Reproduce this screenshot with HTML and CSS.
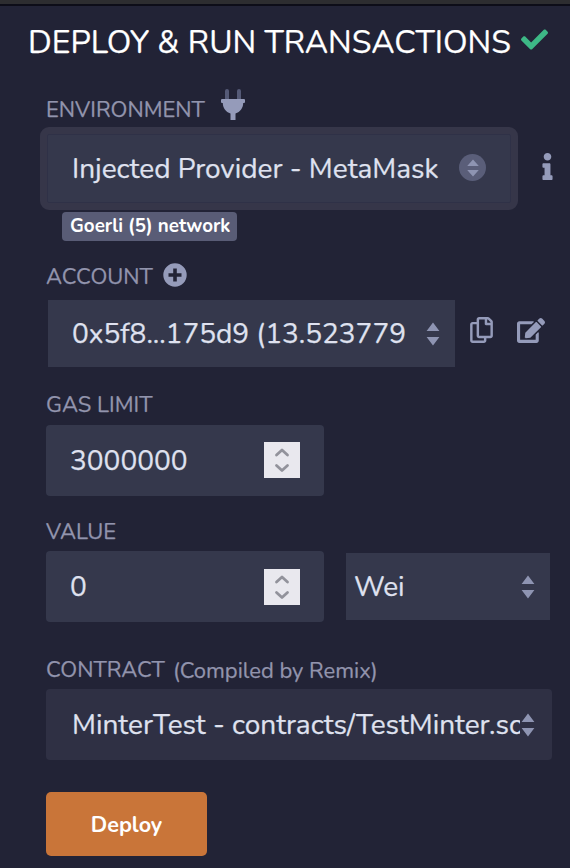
FILE: index.html
```html
<!DOCTYPE html>
<html lang="en">
<head>
<meta charset="utf-8">
<title>Deploy &amp; run transactions</title>
<link rel="stylesheet" href="styles.css">
</head>
<body>
<svg class="defs" aria-hidden="true">
  <symbol id="arrows" viewBox="0 0 14 24"><path d="M7 .5 13.4 9H.6zM.6 15h12.8L7 23.5z"/></symbol>
  <symbol id="spin" viewBox="0 0 36 36"><path d="m12.5 13 5.500-5 5.500 5M12.500 23.500l5.500 5 5.500-5" fill="none" stroke="#92929b" stroke-width="2.800" stroke-linecap="round" stroke-linejoin="round"/></symbol>
</svg>
<main class="panel">
  <header class="heading">
    <h1 class="title">DEPLOY &amp; RUN TRANSACTIONS</h1>
    <svg class="check" viewBox="0 0 512 512"><path d="M173.898 439.404l-166.400-166.400c-9.997-9.997-9.997-26.206 0-36.204l36.203-36.204c9.997-9.998 26.207-9.998 36.204 0L192 312.690 432.095 72.596c9.997-9.997 26.207-9.997 36.204 0l36.203 36.204c9.997 9.997 9.997 26.206 0 36.204l-294.400 294.401c-9.998 9.997-26.207 9.997-36.204-.001z"/></svg>
  </header>

  <section class="group environment">
    <div class="label-row">
      <label class="label">ENVIRONMENT</label>
      <svg class="icon plug" viewBox="0 0 24 32"><path class="prongs" d="M4 2a2 2 0 0 1 4 0v8H4zM16 2a2 2 0 0 1 4 0v8h-4z"/><path d="M1 10h22a1 1 0 0 1 1 1v2a1 1 0 0 1-1 1h-.800c0 5-3 9-7.700 10.500V31h-5v-6.500C4.800 23 1.800 19 1.800 14H1a1 1 0 0 1-1-1v-2a1 1 0 0 1 1-1z"/></svg>
    </div>
    <div class="row">
      <div class="field focused">
        <span class="text">Injected Provider - MetaMask</span>
        <span class="disc"><svg class="arrows small" viewBox="0 0 12 18"><path d="M6 .5 11.800 7H.2zM.2 11h11.600L6 17.500z"/></svg></span>
      </div>
      <svg class="icon info" viewBox="0 0 192 512"><path d="M20 424.229h20V279.771H20c-11.046 0-20-8.954-20-20V212c0-11.046 8.954-20 20-20h112c11.046 0 20 8.954 20 20v212.229h20c11.046 0 20 8.954 20 20V492c0 11.046-8.954 20-20 20H20c-11.046 0-20-8.954-20-20v-47.771c0-11.046 8.954-20 20-20zM96 0C56.235 0 24 32.235 24 72s32.235 72 72 72 72-32.235 72-72S135.764 0 96 0z"/></svg>
    </div>
    <div class="badge">Goerli (5) network</div>
  </section>

  <section class="group account">
    <div class="label-row">
      <label class="label">ACCOUNT</label>
      <svg class="icon plus" viewBox="0 0 24 24"><path fill-rule="evenodd" d="M12 .300a11.700 11.700 0 1 1 0 23.400A11.700 11.700 0 0 1 12 .300zM10.200 5.500v4.700H5.500v3.600h4.700v4.700h3.600v-4.700h4.700v-3.600h-4.700V5.500z"/></svg>
    </div>
    <div class="row">
      <div class="field select-account">
        <span class="text">0x5f8...175d9 (13.523779</span>
        <svg class="arrows"><use href="#arrows"/></svg>
      </div>
      <svg class="icon copy" viewBox="0 0 448 512"><path d="M433.941 65.941l-51.882-51.882A48 48 0 0 0 348.118 0H176c-26.510 0-48 21.490-48 48v48H48c-26.510 0-48 21.490-48 48v320c0 26.510 21.490 48 48 48h224c26.510 0 48-21.490 48-48v-48h80c26.510 0 48-21.490 48-48V99.882a48 48 0 0 0-14.059-33.941zM266 464H54a6 6 0 0 1-6-6V150a6 6 0 0 1 6-6h74v224c0 26.510 21.490 48 48 48h96v42a6 6 0 0 1-6 6zm128-96H182a6 6 0 0 1-6-6V54a6 6 0 0 1 6-6h106v88c0 13.255 10.745 24 24 24h88v202a6 6 0 0 1-6 6zm6-256h-64V48h9.632c1.591 0 3.117.632 4.243 1.757l48.368 48.368a6 6 0 0 1 1.757 4.243V112z"/></svg>
      <svg class="icon edit" viewBox="0 0 576 512"><path d="M402.600 83.200l90.200 90.200c3.800 3.800 3.800 10 0 13.800L274.400 405.600l-92.800 10.300c-12.400 1.400-22.900-9.100-21.500-21.500l10.300-92.800L388.800 83.200c3.800-3.800 10-3.800 13.800 0zm162-22.900l-48.800-48.800c-15.200-15.200-39.900-15.200-55.200 0l-35.400 35.400c-3.800 3.800-3.800 10 0 13.800l90.200 90.200c3.800 3.800 10 3.800 13.800 0l35.400-35.400c15.200-15.300 15.200-40 0-55.200zM384 346.200V448H64V128h229.800c3.200 0 6.200-1.300 8.500-3.500l40-40c7.600-7.600 2.200-20.500-8.500-20.500H48C21.500 64 0 85.500 0 112v352c0 26.500 21.500 48 48 48h352c26.500 0 48-21.500 48-48V306.200c0-10.700-12.900-16-20.500-8.500l-40 40c-2.200 2.300-3.500 5.300-3.500 8.500z"/></svg>
    </div>
  </section>

  <section class="group gas">
    <div class="label-row"><label class="label">GAS LIMIT</label></div>
    <div class="field number">
      <span class="text">3000000</span>
      <svg class="spinner"><use href="#spin"/></svg>
    </div>
  </section>

  <section class="group value">
    <div class="label-row"><label class="label">VALUE</label></div>
    <div class="row">
      <div class="field number">
        <span class="text">0</span>
        <svg class="spinner"><use href="#spin"/></svg>
      </div>
      <div class="field unit">
        <span class="text">Wei</span>
        <svg class="arrows"><use href="#arrows"/></svg>
      </div>
    </div>
  </section>

  <section class="group contract">
    <div class="label-row">
      <label class="label">CONTRACT</label>
      <span class="label note">(Compiled by Remix)</span>
    </div>
    <div class="field select-contract">
      <span class="text">MinterTest - contracts/TestMinter.sol</span>
      <svg class="arrows"><use href="#arrows"/></svg>
    </div>
  </section>

  <button class="deploy">Deploy</button>
</main>
</body>
</html>
```
FILE: styles.css
```css
* { box-sizing: border-box; }
body {
  margin: 0;
  height: 868px;
  overflow: hidden;
  background: #222336;
  border-top: 4px solid #2d2d30;
  font-family: Nunito, Lato, "Open Sans", sans-serif;
  color: #dfe1ef;
  -webkit-text-stroke: 0.25px currentColor;
}
.defs { position: absolute; width: 0; height: 0; }
svg { display: block; flex: none; }
.panel {
  height: 864px;
  border-top: 2px solid #0d0d18;
  padding-left: 46px;
}
.heading { display: flex; height: 84px; margin-left: -18px; }
.title {
  margin: 0;
  width: 493px;
  font-size: 32px;
  line-height: 38px;
  padding-top: 18px;
  font-weight: 400;
  color: #fff;
  white-space: nowrap;
}
.check { width: 27px; height: 27px; margin-top: 20px; fill: #3db886; }
.group { display: flex; flex-direction: column; align-items: flex-start; }
.environment { height: 172px; }
.account { height: 129px; }
.gas { height: 127px; }
.value { height: 137px; }
.contract { height: 137px; }
.label-row { display: flex; }
.environment .label-row { height: 37px; }
.account .label-row { height: 38px; }
.gas .label-row { height: 34px; }
.value .label-row { height: 33px; }
.contract .label-row { height: 34px; }
.label {
  padding-top: 1px;
  font-size: 22px;
  line-height: 26px;
  color: #9294ad;
  white-space: nowrap;
}
.environment .label { width: 175px; padding-top: 7px; }
.account .label { width: 117px; padding-top: 2px; }
.contract .label { width: 127px; padding-top: 2px; }
.contract .note { padding-top: 3px; width: auto; }
.icon { fill: #959bba; }
.plug { width: 24px; height: 32px; margin-top: -1px; }
.prongs { fill: #555a77; }
.plus { width: 24px; height: 24px; margin-top: 1px; }
.row { display: flex; }
.field {
  display: flex;
  align-items: center;
  background: #35384c;
  font-size: 28px;
  line-height: 36px;
}
.text { flex: 1; min-width: 0; overflow: hidden; white-space: nowrap; }
.arrows { width: 14px; height: 24px; fill: #8e94b2; }
.focused {
  width: 478px;
  height: 83px;
  margin-left: -6px;
  padding: 0 25px;
  border: 7px solid #363649;
  border-radius: 9px;
  box-shadow: inset 0 0 0 1px #2f3147;
}
.disc {
  display: grid;
  place-items: center;
  width: 27px;
  height: 27px;
  margin-top: -2px;
  border-radius: 50%;
  background: #5a5e79;
}
.small { width: 12px; height: 18px; }
.info { width: 11px; height: 27px; margin: 26px 0 0 24px; }
.badge {
  width: 175px;
  height: 29px;
  margin: 2px 0 0 16px;
  padding-left: 8px;
  border-radius: 4px;
  background: #595c76;
  color: #fff;
  font-size: 18.800px;
  line-height: 29px;
  font-weight: 700;
  white-space: nowrap;
  -webkit-text-stroke: 0;
}
.select-account { width: 407px; height: 67px; margin-left: 2px; padding: 0 15px 0 24px; }
.copy { width: 23px; height: 26px; margin: 17px 0 0 15px; }
.edit { width: 28px; height: 25px; margin: 18px 0 0 24px; }
.number { width: 278px; height: 71px; padding: 0 24px; border-radius: 4px; }
.spinner { width: 36px; height: 36px; background: #e9e8ee; }
.gas .spinner { margin-top: -1px; }
.unit { width: 204px; height: 67px; margin: 2px 0 0 22px; padding: 0 15px 0 8px; }
.select-contract {
  width: 506px;
  height: 71px;
  padding: 0 17px 0 26px;
  border-radius: 4px;
  background: #2f3044;
}
.select-contract .text { margin-right: 1px; }
.deploy {
  display: block;
  width: 161px;
  height: 64px;
  padding: 2px 0 0;
  border: 0;
  border-radius: 5px;
  background: #c97539;
  color: #fff;
  font: 700 21.600px Nunito, Lato, sans-serif;
  -webkit-text-stroke: 0;
}
```
